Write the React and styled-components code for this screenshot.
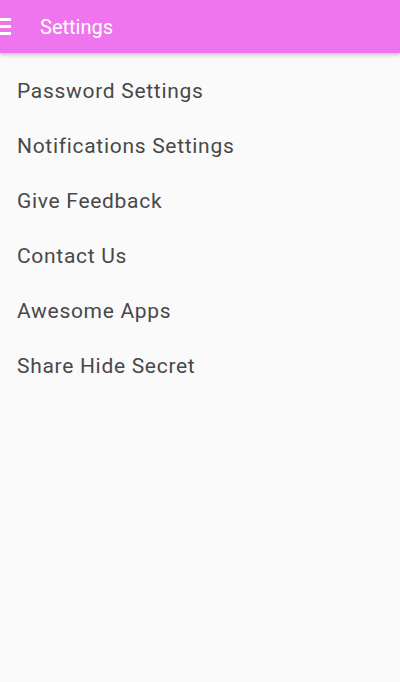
import React from 'react'
import styled, { createGlobalStyle } from 'styled-components'

const GlobalStyle = createGlobalStyle`
    html, body {
        margin: 0;
        padding: 0;
        background: #fafafa;
    }
    body {
        font-family: Roboto, "Noto Sans", sans-serif;
    }
`;

const items = [
    'Password Settings',
    'Notifications Settings',
    'Give Feedback',
    'Contact Us',
    'Awesome Apps',
    'Share Hide Secret',
]

function App() {
    return (
        <AppStyled>
            <GlobalStyle />
            <Toolbar>
                <MenuIcon aria-label="menu">
                    <span />
                    <span />
                    <span />
                </MenuIcon>
                <Title>Settings</Title>
            </Toolbar>
            <List>
                {items.map(item => (
                    <Row key={item}>{item}</Row>
                ))}
            </List>
        </AppStyled>
    )
}

const AppStyled = styled.div`
    min-height: 682px;
    background: #fafafa;
`;

const Toolbar = styled.header`
    height: 53px;
    background: #ee75ee;
    display: flex;
    align-items: center;
    box-shadow: 0 2px 4px rgba(0, 0, 0, 0.22);
    position: relative;
`;

const MenuIcon = styled.div`
    width: 11px;
    display: flex;
    flex-direction: column;
    gap: 4px;
    span {
        display: block;
        height: 3px;
        background: #fff;
    }
`;

const Title = styled.h1`
    margin: 0 0 0 29px;
    font-size: 20px;
    font-weight: 400;
    color: #fff;
`;

const List = styled.ul`
    list-style: none;
    margin: 0;
    padding: 10px 0 0;
`;

const Row = styled.li`
    height: 55px;
    display: flex;
    align-items: center;
    padding-left: 17px;
    font-size: 21px;
    letter-spacing: 0.7px;
    color: #484848;
`;

export default App
